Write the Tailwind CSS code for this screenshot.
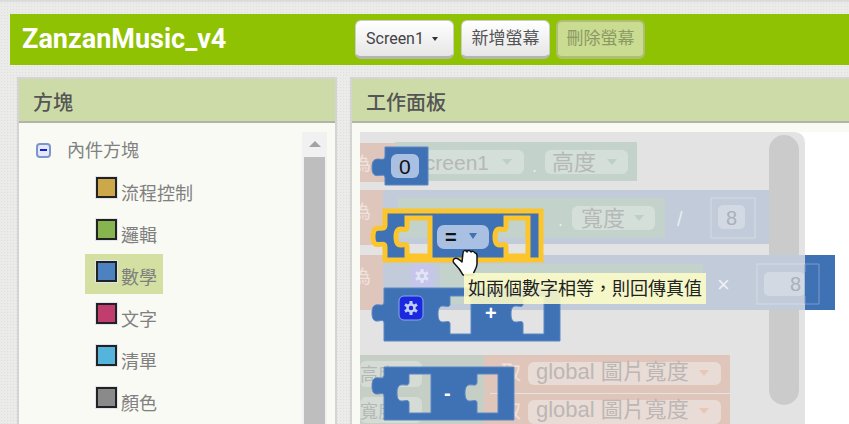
<!DOCTYPE html>
<html lang="zh-Hant">
<head>
<meta charset="UTF-8">
<title>ZanzanMusic_v4</title>
<script src="https://cdn.jsdelivr.net/npm/@tailwindcss/browser@4"></script>
</head>
<body class="h-[424px] w-[849px] overflow-hidden bg-[#ebebe9] font-['Roboto','Noto_Sans_CJK_TC',sans-serif] text-[#555]">
  <div class="h-[424px] border-t-2 border-[#dcdcdc] bg-[radial-gradient(#dedede_1px,transparent_1px)] bg-[length:3px_3px] pt-[12px] pl-[10px]">

    <!-- Top bar -->
    <header class="flex h-[51px] items-center bg-[#8fc202]">
      <h1 class="ml-[12px] w-[333px] text-[27px] font-bold text-white">ZanzanMusic_v4</h1>
      <button class="flex h-[39px] w-[99px] items-center rounded-[6px] border border-[#ccc] border-b-[3px] border-b-[#b5b5b5] bg-gradient-to-b from-white to-[#e6e6e6] pl-[10px] text-[16px] text-[#444]">
        Screen1<span class="ml-[8px] mt-[1px] border-x-[3px] border-t-[4px] border-x-transparent border-t-[#333]"></span>
      </button>
      <button class="ml-[7px] h-[39px] w-[89px] rounded-[6px] border border-[#ccc] border-b-[3px] border-b-[#b5b5b5] bg-gradient-to-b from-white to-[#e6e6e6] text-[17px] text-[#555]">新增螢幕</button>
      <button class="ml-[6px] h-[39px] w-[89px] rounded-[6px] border-2 border-[#aebf75] border-b-[3px] bg-[#cadb92] text-[17px] text-[#8a9a62]">刪除螢幕</button>
    </header>

    <div class="ml-[7px] mt-[12px] flex gap-[13px]">
      <!-- Blocks panel -->
      <section class="h-[350px] w-[320px] shrink-0 border-x-[2px] border-t-[2px] border-[#d4d4d4] bg-[#f9faf4]">
        <h2 class="flex h-[44px] items-center border-b-[2px] border-[#b2b4a6] bg-[#cddba8] pl-[14px] pt-[5px] text-[20px] font-medium text-[#555]">方塊</h2>
        <div class="relative pl-[17px] pt-[9px]">
          <div class="flex h-[36px] items-center text-[18px] text-[#808080]">
            <span class="flex h-[15px] w-[15px] items-center justify-center rounded-[4px] border-2 border-[#7d95cf] bg-[#e4e9f7]"><span class="h-[2px] w-[7px] bg-[#1a1ae0]"></span></span>
            <span class="ml-[16px]">內件方塊</span>
          </div>
          <ul class="text-[18px] text-[#808080]">
            <li class="ml-[49px] flex h-[42px] w-[78px] pl-[11px] pt-[9px]"><span class="h-[21px] w-[21px] shrink-0 border-2 border-[#222] bg-[#cca84b] outline outline-1 outline-[#dfe4f0]"></span><span class="ml-[4px] mt-[3px] whitespace-nowrap">流程控制</span></li>
            <li class="ml-[49px] flex h-[42px] w-[78px] pl-[11px] pt-[9px]"><span class="h-[21px] w-[21px] shrink-0 border-2 border-[#222] bg-[#86b44e] outline outline-1 outline-[#dfe4f0]"></span><span class="ml-[4px] mt-[3px] whitespace-nowrap">邏輯</span></li>
            <li class="ml-[49px] mt-[2px] flex h-[40px] w-[78px] bg-[#d3e0a1] pl-[11px] pt-[7px]"><span class="h-[21px] w-[21px] shrink-0 border-2 border-[#222] bg-[#4c82c0] outline outline-1 outline-[#dfe4f0]"></span><span class="ml-[4px] mt-[3px] whitespace-nowrap">數學</span></li>
            <li class="ml-[49px] flex h-[42px] w-[78px] pl-[11px] pt-[9px]"><span class="h-[21px] w-[21px] shrink-0 border-2 border-[#222] bg-[#c13d6e] outline outline-1 outline-[#dfe4f0]"></span><span class="ml-[4px] mt-[3px] whitespace-nowrap">文字</span></li>
            <li class="ml-[49px] flex h-[42px] w-[78px] pl-[11px] pt-[9px]"><span class="h-[21px] w-[21px] shrink-0 border-2 border-[#222] bg-[#55b4dc] outline outline-1 outline-[#dfe4f0]"></span><span class="ml-[4px] mt-[3px] whitespace-nowrap">清單</span></li>
            <li class="ml-[49px] flex h-[42px] w-[78px] pl-[11px] pt-[9px]"><span class="h-[21px] w-[21px] shrink-0 border-2 border-[#222] bg-[#8a8a8a] outline outline-1 outline-[#dfe4f0]"></span><span class="ml-[4px] mt-[3px] whitespace-nowrap">顏色</span></li>
          </ul>
          <!-- tree scrollbar -->
          <div class="absolute right-[8px] top-[9px] flex h-[300px] w-[25px] flex-col items-center overflow-hidden bg-[#f1f1f1]">
            <span class="mt-[9px] shrink-0 border-x-[6px] border-b-[6px] border-x-transparent border-b-[#a3a3a3]"></span>
            <span class="mt-[10px] h-[300px] w-[21px] shrink-0 bg-[#bebebe]"></span>
          </div>
        </div>
      </section>

      <!-- Workspace panel -->
      <section class="h-[350px] flex-1 border-l-[2px] border-t-[2px] border-[#d4d4d4] bg-[#f9faf4]">
        <h2 class="flex h-[44px] items-center border-b-[2px] border-[#b2b4a6] bg-[#cddba8] pl-[14px] pt-[5px] text-[20px] font-medium text-[#555]">工作面板</h2>
        <div class="relative ml-[8px] mt-[9px] h-[292px] bg-white">
          <svg class="block" width="489" height="292" viewBox="360 132 489 292" font-family="'Liberation Sans', 'Noto Sans CJK TC', sans-serif">
            <!-- flyout -->
            <path d="M360 132H793q12 0 12 12V424H360Z" fill="#e3e3e3"/>

            <!-- flyout scrollbar -->
            <rect x="769" y="135" width="30" height="270" rx="15" fill="#cbcbcb"/>

            <!-- faded blocks under the flyout -->
            <g>
              <rect x="360" y="143" width="40" height="39" fill="#dfc6bd"/>
              <text x="353" y="170" font-size="18" fill="#efe3dd">為</text>
              <rect x="395" y="142" width="242" height="39" fill="#c3d3cb"/>
              <rect x="425" y="150" width="99" height="24" rx="6" fill="#d5dfda"/>
              <text x="489" y="170" text-anchor="end" font-size="21" fill="#b4b9b6">creen1</text>
              <path d="M502 159h10l-5 6Z" fill="#bcd0c6"/>
              <text x="532" y="172" font-size="18" fill="#e8eeea">.</text>
              <rect x="545" y="150" width="83" height="24" rx="6" fill="#d5dfda"/>
              <text x="552" y="170" font-size="22" fill="#b4b9b6">高度</text>
              <path d="M607 159h10l-5 6Z" fill="#bcd0c6"/>

              <rect x="360" y="190" width="28" height="55" fill="#dfc6bd"/>
              <text x="353" y="218" font-size="18" fill="#efe3dd">為</text>
              <rect x="383" y="190" width="386" height="54" fill="#c1cbd9"/>
              <rect x="398" y="198" width="267" height="40" fill="#c3d3cb"/>
              <text x="558" y="226" font-size="18" fill="#e8eeea">.</text>
              <rect x="572" y="206" width="83" height="24" rx="6" fill="#d5dfda"/>
              <text x="581" y="226" font-size="22" fill="#b4b9b6">寬度</text>
              <path d="M634 215h10l-5 6Z" fill="#bcd0c6"/>
              <text x="677" y="226" font-size="20" fill="#e8eeea">/</text>
              <rect x="711" y="198" width="44" height="40" fill="none" stroke="#d5dbe5"/>
              <rect x="718" y="205" width="27" height="24" rx="5" fill="#d3d9e2"/>
              <text x="726" y="225" font-size="20" fill="#a9afb8">8</text>

              <rect x="360" y="255" width="28" height="55" fill="#dfc6bd"/>
              <text x="353" y="283" font-size="18" fill="#efe3dd">為</text>
              <rect x="383" y="255" width="422" height="55" fill="#c1cbd9"/>
              <rect x="440" y="264" width="263" height="40" fill="#c3d3cb"/>
              <rect x="410" y="264" width="24" height="24" rx="6" fill="#c5c6ea"/>
              <g transform="translate(422 276)" fill="none" stroke="#e3e5f6">
                <circle r="3.500" stroke-width="2.500"/>
                <path stroke-width="3" d="M0-7V-4M0 7V4M-6-3.500-3.500-2M6 3.500 3.500 2M-6 3.500-3.500 2M6-3.500 3.500-2"/>
              </g>
              <text x="717" y="292" font-size="22" fill="#eef1f5">×</text>
              <rect x="757" y="264" width="48" height="40" fill="none" stroke="#d5dbe5"/>
              <rect x="764" y="272" width="41" height="24" rx="5" fill="#d3d9e2"/>
              <text x="790" y="291" font-size="20" fill="#a9afb8">8</text>

              <rect x="360" y="355" width="130" height="69" fill="#c6cfc6"/>
              <rect x="360" y="361" width="62" height="26" rx="6" fill="#d5dbd5"/>
              <rect x="360" y="397" width="62" height="26" rx="6" fill="#d5dbd5"/>
              <text x="360" y="381" font-size="18" fill="#b4b9b6">高度</text>
              <text x="360" y="418" font-size="18" fill="#b4b9b6">寬度</text>
              <rect x="484" y="355" width="246" height="38" fill="#e0c6ba"/>
              <rect x="484" y="394" width="246" height="30" fill="#e0c6ba"/>
              <text x="501" y="380" font-size="20" fill="#f0e2dc">取</text>
              <text x="501" y="418" font-size="20" fill="#f0e2dc">取</text>
              <rect x="528" y="362" width="193" height="23" rx="6" fill="#e9dcd6"/>
              <rect x="528" y="400" width="193" height="24" rx="6" fill="#e9dcd6"/>
              <text x="536" y="379" font-size="22" fill="#bcb7b4">global 圖片寬度</text>
              <text x="536" y="417" font-size="22" fill="#bcb7b4">global 圖片寬度</text>
              <path d="M699 370h10l-5 6Z" fill="#e9c6b6"/>
              <path d="M699 408h10l-5 6Z" fill="#e9c6b6"/>
            </g>

            <!-- block sticking out of the flyout -->
            <path d="M805 255h30v55h-30v-6h14v-40h-14Z" fill="#3f71b5"/>
            <path d="M805 264h14v40h-14Z" fill="#3f71b5" stroke="#7d9dcd"/>
            <rect x="805" y="272" width="4" height="24" fill="#3f71b5"/>

            <!-- number block -->
            <path d="M385 147h43v38h-43v-7c0-8-13 5-13-10.500s13-3 13-11.500Z" fill="#3f71b5" stroke="#5a87c4"/>
            <rect x="391" y="154" width="28" height="24" rx="6" fill="#a9c0e3"/>
            <text x="399" y="174" font-size="21" fill="#111">0</text>

            <!-- selected equals block -->
            <path fill-rule="evenodd" stroke="#fcc52c" stroke-width="5" fill="#3f71b5" d="M385 211h156v49h-156v-13c0-8-12 5-12-10.500s12-3 12-11.500Z M407 218h23v38h-23v-9c0-7-11 5-11-10s11-3 11-10Z M506 218h22v38h-22v-9c0-7-11 5-11-10s11-3 11-10Z"/>
            <rect x="437" y="225" width="52" height="24" rx="7" fill="#a9c0e3"/>
            <text x="445" y="244" font-size="20" font-weight="bold" fill="#111">=</text>
            <path d="M469 233h8l-4 6Z" fill="#3f71b5"/>

            <!-- plus block -->
            <path fill-rule="evenodd" fill="#3f71b5" stroke="#5a87c4" d="M384 288h176v53h-176v-18c0-7-12 5-12-10s12-3 12-11Z M450 296h21v38h-21v-10c0-7-12 5-12-10s12-3 12-10Z M523 296h21v38h-21v-10c0-7-12 5-12-10s12-3 12-10Z"/>
            <rect x="399" y="296" width="24" height="24" rx="5" fill="#1a28e0" stroke="#8ea6e8"/>
            <g transform="translate(411 308)" fill="none" stroke="#c4cff5">
              <circle r="3.500" stroke-width="2.500"/>
              <path stroke-width="3" d="M0-7V-4M0 7V4M-6-3.500-3.500-2M6 3.500 3.500 2M-6 3.500-3.500 2M6-3.500 3.500-2"/>
            </g>
            <text x="485" y="320" font-size="20" font-weight="bold" fill="#fff">+</text>

            <!-- minus block -->
            <path fill-rule="evenodd" fill="#3f71b5" stroke="#5a87c4" d="M384 367h130v53h-130v-24c0-7-12 5-12-10s12-3 12-11Z M409 374h22v39h-22v-10c0-7-12 5-12-10s12-3 12-11Z M477 374h21v39h-21v-10c0-7-12 5-12-10s12-3 12-11Z"/>
            <text x="444" y="400" font-size="20" font-weight="bold" fill="#fff">-</text>

            <!-- hand cursor -->
            <path fill="#fff" stroke="#111" stroke-width="1.500" stroke-linejoin="round" d="M454 259c2-2 5 0 8 3l1-9c0-3 3-3 4-1 0-2 3-2 4 0 1-1 3-1 4 1 1 0 2 1 2 3v8c0 3-2 6-3 8l-1 3h-10c-2-4-6-9-9-12-1-1-1-3 0-4Z"/>
          </svg>
          <div class="absolute left-[104px] top-[141px] flex h-[31px] w-[242px] items-center whitespace-nowrap bg-[#fbfbc8]/90 pl-[4px] text-[18px] text-[#222]">如兩個數字相等，則回傳真值</div>
        </div>
      </section>
    </div>
  </div>
</body>
</html>
